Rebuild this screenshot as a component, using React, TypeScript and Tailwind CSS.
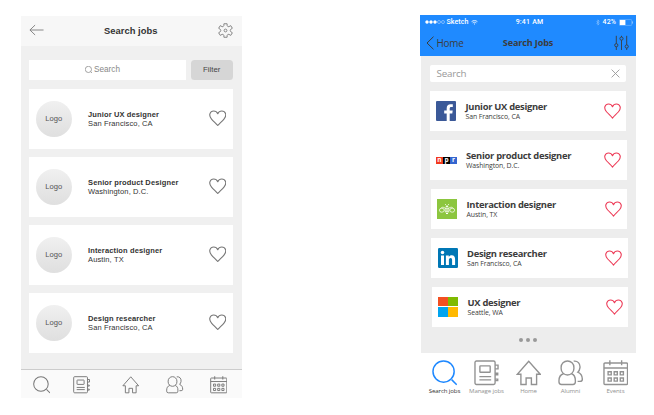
import React from 'react';

type IconProps = { className?: string };

const Heart = ({ className }: IconProps) => (
  <svg viewBox="0 0 18 17" className={className} fill="none" stroke="currentColor" strokeWidth="1.15" strokeLinejoin="round">
    <path d="M9 16C7.6 14.2 4.8 11.8 2.6 9.3C.9 7.3.4 5.4 1 3.7C1.6 1.9 3.1 1 4.8 1C6.7 1 8.3 2.2 9 3.9C9.7 2.2 11.3 1 13.2 1C14.9 1 16.4 1.9 17 3.7C17.6 5.4 17.1 7.3 15.4 9.3C13.2 11.8 10.4 14.2 9 16Z" />
  </svg>
);

const SearchIcon = ({ className }: IconProps) => (
  <svg viewBox="0 0 26 26" className={className} fill="none" stroke="currentColor" strokeWidth="1.5">
    <circle cx="11.8" cy="11.8" r="10.8" />
    <path d="M20 20l5.2 5.2" />
  </svg>
);

const NotebookIcon = ({ className }: IconProps) => (
  <svg viewBox="0 0 26 26" className={className} fill="none" stroke="currentColor" strokeWidth="1.4">
    <rect x="1" y="1" width="20.5" height="24" rx="1.5" />
    <rect x="6" y="6" width="10.5" height="6.5" rx=".6" />
    <path d="M5.5 17h12M5.5 20.2h12M21.5 5.2h3v3.8h-3M21.5 13.5h2.7v1.5h-2.7M21.5 19.5h2.7V21h-2.7" />
  </svg>
);

const HomeIcon = ({ className }: IconProps) => (
  <svg viewBox="0 0 26 26" className={className} fill="none" stroke="currentColor" strokeWidth="1.4">
    <path d="M13 1.2L1.3 14.5H5V25H10.3V18.3H15.7V25H21V14.5H24.7Z" />
  </svg>
);

const PeopleIcon = ({ className }: IconProps) => (
  <svg viewBox="0 0 26 26" className={className} fill="none" stroke="currentColor" strokeWidth="1.4">
    <rect x="3.2" y="1" width="13" height="14.3" rx="6.5" />
    <path d="M5.7 14C2.5 14.9 1 17.5 1 21V22.5Q1 25 3.5 25H15.2Q17.7 25 17.7 22.5V21C17.7 17.5 16.5 14.9 13.7 14" />
    <path d="M16 1.2C20 .6 22.8 3.5 22.4 7.8C22.2 9.8 21.4 11.3 20.2 12.4C23.6 13.8 24.8 16.5 24.8 19.7Q24.8 21.8 22.5 21.8H20" />
  </svg>
);

const CalendarIcon = ({ className }: IconProps) => (
  <svg viewBox="0 0 26 26" className={className} fill="none" stroke="currentColor" strokeWidth="1.4">
    <rect x="1" y="3" width="24" height="22" rx="1" />
    <path d="M1 8.2h24M7 .3v5M19 .3v5" />
    <path d="M5.2 12h3.2v3.2H5.2zM11.4 12h3.2v3.2h-3.2zM17.6 12h3.2v3.2h-3.2zM5.2 18.4h3.2v3.2H5.2zM11.4 18.4h3.2v3.2h-3.2zM17.6 18.4h3.2v3.2h-3.2z" />
  </svg>
);

const GearIcon = () => (
  <svg viewBox="0 0 16 16" className="mb-px size-[15px]" fill="none" stroke="currentColor" strokeWidth="1" strokeLinejoin="round">
    <path d="M6.2 3L6.3.8H9.7L9.8 3Q10.4 4.3 11.6 3.9L13.6 2.8L15.3 5.6L13.5 6.8Q12.6 8 13.5 9.2L15.3 10.4L13.6 13.2L11.6 12.1Q10.4 11.7 9.8 13L9.7 15.2H6.3L6.2 13Q5.6 11.7 4.4 12.1L2.4 13.2L.7 10.4L2.5 9.2Q3.4 8 2.5 6.8L.7 5.6L2.4 2.8L4.4 3.9Q5.6 4.3 6.2 3Z" />
    <circle cx="8" cy="8" r="1.5" />
  </svg>
);

const wireJobs = [
  { title: 'Junior UX designer', place: 'San Francisco, CA' },
  { title: 'Senior product Designer', place: 'Washington, D.C.' },
  { title: 'Interaction designer', place: 'Austin, TX' },
  { title: 'Design researcher', place: 'San Francisco, CA' },
];

function Wireframe() {
  return (
    <section className="flex h-[382px] w-[221px] flex-col bg-[#f0f0f0] font-['Liberation_Sans',sans-serif] text-[#333]">
      <header className="flex h-[30px] shrink-0 items-center justify-between bg-[#f7f7f7] pr-[8.5px] pl-[8px] text-[#808080]">
        <svg viewBox="0 0 16 12" className="mb-[2px] h-[12px] w-[15px]" fill="none" stroke="currentColor" strokeWidth="1">
          <path d="M15.5 6H1M6.5.7L1 6L6.5 11.3" />
        </svg>
        <h1 className="pb-px text-[9.4px] leading-3 font-bold tracking-[0.05px] text-[#333]">Search jobs</h1>
        <GearIcon />
      </header>
      <div className="mt-[14px] flex h-[20px] shrink-0 gap-[5.5px] pl-[8px]">
        <div className="flex w-[157px] items-center justify-center gap-[2px] bg-white pr-[9.5px] text-[8.2px] text-[#888]">
          <SearchIcon className="size-[7.5px] [stroke-width:2.6]" />
          <span>Search</span>
        </div>
        <button className="w-[41.5px] rounded-[3.5px] bg-[#d6d6d6] text-[7.8px] text-[#444]">Filter</button>
      </div>
      <ul className="mt-[9px] flex flex-col gap-[8.3px] pl-[8px]">
        {wireJobs.map((job) => (
          <li key={job.title} className="flex h-[59.8px] w-[204.5px] items-center bg-white pr-[7px] pl-[7.5px]">
            <div className="flex size-[35.5px] items-center justify-center rounded-full bg-linear-to-b from-[#f0f0f0] to-[#dfdfdf] text-[7.6px] text-[#555]">Logo</div>
            <div className="ml-[16.5px] flex-1 text-[7.5px] leading-[9.3px] tracking-[0.13px] whitespace-nowrap">
              <h2 className="font-bold">{job.title}</h2>
              <p>{job.place}</p>
            </div>
            <Heart className="mb-[1px] h-[16.5px] w-[17.5px] text-[#777]" />
          </li>
        ))}
      </ul>
      <nav className="mt-auto flex h-[29px] shrink-0 items-center border-t-[1.5px] border-[#ccc] bg-[#fafafa] pt-[2px] pl-[12px] text-[#777]">
        <SearchIcon className="size-[17.5px]" />
        <NotebookIcon className="ml-[22.5px] size-[17.5px]" />
        <HomeIcon className="ml-[32px] size-[17.5px]" />
        <PeopleIcon className="ml-[26.5px] size-[17.5px]" />
        <CalendarIcon className="ml-[26px] size-[17.5px]" />
      </nav>
    </section>
  );
}

const FacebookLogo = () => (
  <svg viewBox="0 0 20 20" className="size-[20px]">
    <rect width="20" height="20" rx="1" fill="#3b5998" />
    <path fill="#fff" d="M10.7 20V12.4H8.2V9.4H10.7V7.2C10.7 4.6 12.2 3.2 14.6 3.2L16.8 3.3V6H15.3C14 6 13.7 6.6 13.7 7.6V9.4H16.7L16.3 12.4H13.7V20Z" />
  </svg>
);

const NprLogo = () => (
  <div className="flex h-[7px] w-[21px] shrink-0 text-center text-[6.5px] leading-[6px] font-bold text-white">
    <span className="w-[7px] bg-[#f23a1d]">n</span>
    <span className="w-[7px] bg-black">p</span>
    <span className="w-[7px] bg-[#3465cf]">r</span>
  </div>
);

const BeeLogo = () => (
  <svg viewBox="0 0 20 20" className="size-[20px]" fill="none" stroke="#fff" strokeWidth=".75">
    <rect width="20" height="20" fill="#8cc63f" stroke="none" />
    <ellipse cx="4.8" cy="11.2" rx="2.4" ry="2" />
    <ellipse cx="15.2" cy="11.2" rx="2.4" ry="2" />
    <path d="M8.5 9.5C7 8.2 5.5 7.9 4.3 8.7M11.5 9.5C13 8.2 14.5 7.9 15.7 8.7M8 5l1.4 1.5M12 5l-1.4 1.5" />
    <path d="M8.8 7.4h2.4M7.8 9.2h4.4M7.4 11h5.2M7.8 12.8h4.4M9 14.5h2" strokeWidth="1" />
  </svg>
);

const LinkedInLogo = () => (
  <svg viewBox="0 0 20 20" className="size-[20px]">
    <rect width="20" height="20" rx="1.2" fill="#0077b5" />
    <circle cx="4.5" cy="4.6" r="1.75" fill="#fff" />
    <path fill="#fff" d="M3 7.6H6V17H3ZM7.9 7.6H10.8V8.9C11.4 7.9 12.4 7.3 13.7 7.3C16.3 7.3 17.1 9 17.1 11.6V17H14.1V12.2C14.1 10.9 13.9 9.9 12.6 9.9C11.3 9.9 10.9 10.9 10.9 12.1V17H7.9Z" />
  </svg>
);

const MicrosoftLogo = () => (
  <div className="grid size-[20px] grid-cols-2 gap-[0.8px]">
    <i className="bg-[#f25022]" />
    <i className="bg-[#7fba00]" />
    <i className="bg-[#00a4ef]" />
    <i className="bg-[#ffb900]" />
  </div>
);

const jobs = [
  { title: 'Junior UX designer', place: 'San Francisco, CA', logo: <FacebookLogo />, offset: 'ml-[9.5px]' },
  { title: 'Senior product designer', place: 'Washington, D.C.', logo: <NprLogo />, offset: 'ml-[10px]' },
  { title: 'Interaction designer', place: 'Austin, TX', logo: <BeeLogo />, offset: 'ml-[10.5px]' },
  { title: 'Design researcher', place: 'San Francisco, CA', logo: <LinkedInLogo />, offset: 'ml-[11px]' },
  { title: 'UX designer', place: 'Seattle, WA', logo: <MicrosoftLogo />, offset: 'ml-[11.5px]' },
];

const tabs = [
  { label: 'Search jobs', Icon: SearchIcon, width: 'w-[45px]', color: 'text-[#1e88ff]', text: 'text-[#333]' },
  { label: 'Manage jobs', Icon: NotebookIcon, width: 'w-[39px]', color: 'text-[#929292]', text: 'text-[#929292]' },
  { label: 'Home', Icon: HomeIcon, width: 'w-[45px]', color: 'text-[#929292]', text: 'text-[#929292]' },
  { label: 'Alumni', Icon: PeopleIcon, width: 'w-[39px]', color: 'text-[#929292]', text: 'text-[#929292]' },
  { label: 'Events', Icon: CalendarIcon, width: 'w-[51px]', color: 'text-[#929292]', text: 'text-[#929292]' },
];

function Mockup() {
  return (
    <section className="flex w-[216px] flex-col font-['Open_Sans',sans-serif] text-[#3c3c3c]">
      <header className="h-[40.5px] bg-[#1f8aff]">
        <div className="grid h-[13px] grid-cols-3 items-center pt-px pr-[2px] pl-[5px] font-['Roboto',sans-serif] text-[7px] font-medium text-white">
          <div className="flex items-center">
            <svg viewBox="0 0 20 4" className="mr-[1.5px] h-[4px] w-[20px]" stroke="#fff" strokeWidth=".4">
              <g fill="#fff">
                <circle cx="2" cy="2" r="1.5" />
                <circle cx="6" cy="2" r="1.5" />
                <circle cx="10" cy="2" r="1.5" />
              </g>
              <g fill="none">
                <circle cx="14" cy="2" r="1.5" />
                <circle cx="18" cy="2" r="1.5" />
              </g>
            </svg>
            <span className="tracking-[0.1px]">Sketch</span>
            <svg viewBox="0 0 8 6" className="ml-[2px] h-[5px] w-[7px]" fill="none" stroke="#fff" strokeWidth="1">
              <path d="M.5 2C2.5.2 5.5.2 7.5 2M1.8 3.5C3 2.4 5 2.4 6.2 3.5" />
              <path d="M3 4.6Q4 3.8 5 4.6L4 5.8Z" fill="#fff" stroke="none" />
            </svg>
          </div>
          <span className="text-center tracking-[0.2px]">9:41 AM</span>
          <div className="flex items-center justify-end">
            <svg viewBox="0 0 5 8" className="mr-[3px] h-[7px] w-[4px]" fill="none" stroke="#9bccff" strokeWidth=".7">
              <path d="M.7 2.2L4 5.6L2.4 7.3V.7L4 2.4L.7 5.8" />
            </svg>
            <span className="mr-[3px] tracking-[0.1px]">42%</span>
            <svg viewBox="0 0 15 7" className="h-[7px] w-[15px]">
              <rect x=".3" y=".6" width="12.4" height="5.8" rx=".6" fill="none" stroke="#8dc5ff" strokeWidth=".5" />
              <rect x=".8" y="1" width="5.6" height="5" fill="#fff" />
              <path d="M13.5 2.4v2.2" stroke="#8dc5ff" strokeWidth=".9" />
            </svg>
          </div>
        </div>
        <div className="grid h-[27px] grid-cols-[75px_66px_75px] items-center">
          <div className="flex items-center gap-[2.5px] pt-[3px] pl-[6px] text-[9.9px] tracking-[-0.2px]">
            <svg viewBox="0 0 8 14" className="mb-[1px] h-[14px] w-[8px]" fill="none" stroke="currentColor" strokeWidth="1">
              <path d="M7.5.7L1 7L7.5 13.3" />
            </svg>
            <span>Home</span>
          </div>
          <h1 className="pt-[3px] text-center text-[9.1px] font-bold tracking-[-0.15px] whitespace-nowrap">Search Jobs</h1>
          <svg viewBox="0 0 15 16" className="mt-[2px] mr-[7px] ml-auto h-[16px] w-[15px]" fill="none" stroke="currentColor" strokeWidth=".9">
            <path d="M2.3.8V8.6M2.3 11.8V15M7.5.8V2M7.5 5.2V15M12.7.8V9.9M12.7 13.1V15" />
            <circle cx="2.3" cy="10.2" r="1.6" />
            <circle cx="7.5" cy="3.6" r="1.6" />
            <circle cx="12.7" cy="11.5" r="1.6" />
          </svg>
        </div>
      </header>
      <main className="ml-px h-[297.5px] bg-[#ededed] pt-[9.5px] pl-[8.5px]">
        <div className="flex h-[17px] w-[196.5px] items-center justify-between rounded-[2px] bg-white pr-[6.5px] pl-[7px] text-[9.8px] tracking-[-0.2px] text-[#999]">
          <span className="pt-px">Search</span>
          <svg viewBox="0 0 9 9" className="size-[9px]" fill="none" stroke="currentColor" strokeWidth=".9">
            <path d="M.6.6L8.4 8.4M8.4.6L.6 8.4" />
          </svg>
        </div>
        <ul className="mt-[9px] -ml-[9.5px] flex flex-col gap-[8.5px]">
          {jobs.map(({ title, place, logo, offset }) => (
            <li key={title} className={offset}>
              <div className="flex h-[40.4px] w-[196.5px] items-center bg-white pr-[5.5px] pl-[6.5px]">
                <div className="flex w-[20px] justify-center">{logo}</div>
                <div className="ml-[9.5px] flex-1 pt-px whitespace-nowrap">
                  <h2 className="text-[9.4px] leading-[11px] font-bold tracking-[-0.29px]">{title}</h2>
                  <p className="text-[6.9px] leading-[9.5px] tracking-[-0.1px]">{place}</p>
                </div>
                <Heart className="h-[16px] w-[17px] text-[#ed3a56]" />
              </div>
            </li>
          ))}
        </ul>
        <div className="mt-[11px] flex justify-center gap-[3px] pr-[9px]">
          <i className="size-[4px] rounded-full bg-[#999]" />
          <i className="size-[4px] rounded-full bg-[#999]" />
          <i className="size-[4px] rounded-full bg-[#999]" />
        </div>
      </main>
      <nav className="flex pt-[7px] pl-[2px]">
        {tabs.map(({ label, Icon, width, color, text }) => (
          <div key={label} className={`${width} flex shrink-0 flex-col items-center`}>
            <Icon className={`size-[25.5px] ${color}`} />
            <span className={`mt-px text-[6.1px] leading-[8px] tracking-[-0.12px] whitespace-nowrap ${text}`}>{label}</span>
          </div>
        ))}
      </nav>
    </section>
  );
}

export default function App() {
  return (
    <div className="flex h-[415px] w-[654px] items-start overflow-hidden bg-white pl-[20.5px]">
      <div className="pt-[16px]">
        <Wireframe />
      </div>
      <div className="ml-[178.5px] pt-[15px]">
        <Mockup />
      </div>
    </div>
  );
}
